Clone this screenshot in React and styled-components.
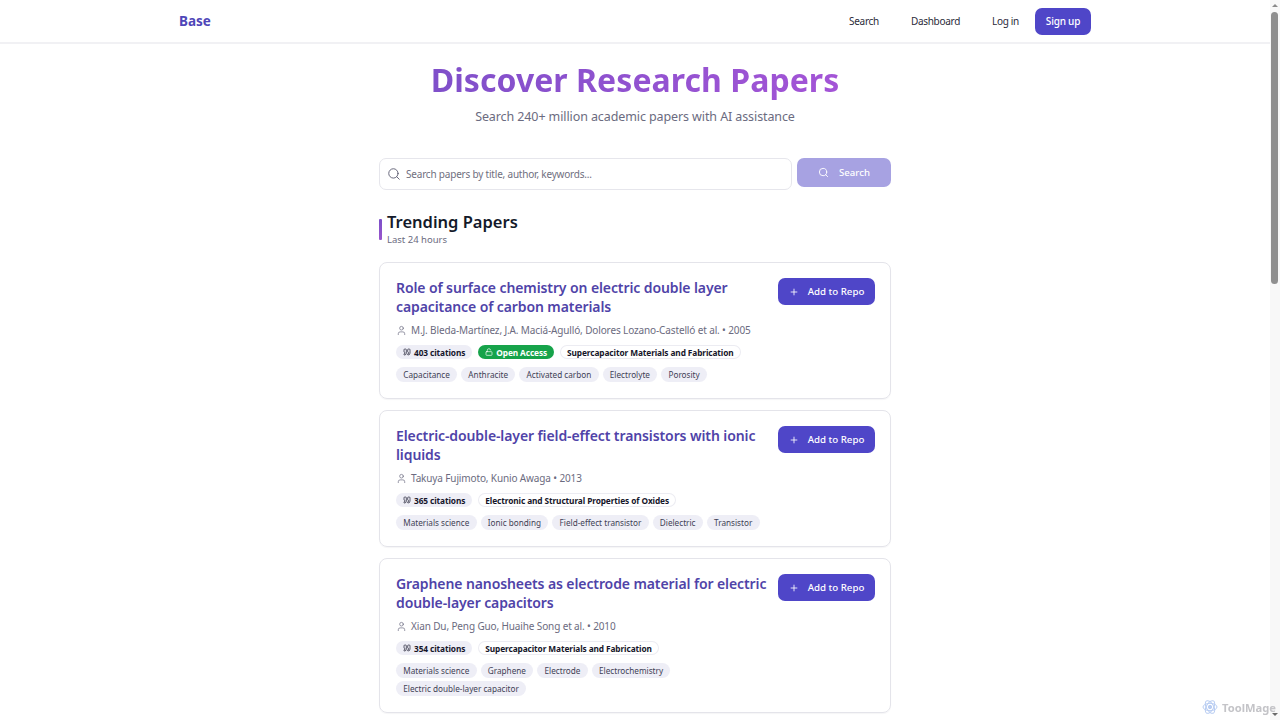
import React from 'react';
import styled, { createGlobalStyle } from 'styled-components';
import { Search, User, Plus, LockOpen, Quote } from 'lucide-react';

const GlobalStyle = createGlobalStyle`
  html, body {
    margin: 0;
    height: 720px;
    overflow: hidden;
    background: #fff;
    font-family: "Noto Sans", "Open Sans", sans-serif;
    color: #111827;
  }
  * { box-sizing: border-box; }
`;

const Shell = styled.div`
  display: flex;
  height: 720px;
  overflow: hidden;
`;

const Page = styled.div`
  flex: 1;
  min-width: 0;
`;

const Header = styled.header`
  height: 44px;
  border-bottom: 2px solid #f1f1f4;
  display: flex;
  justify-content: center;
`;

const HeaderInner = styled.div`
  width: 912px;
  display: flex;
  align-items: center;
  justify-content: space-between;
`;

const Logo = styled.div`
  font-size: 13.5px;
  line-height: 16px;
  font-weight: 700;
  color: #4f46b8;
`;

const Nav = styled.nav`
  display: flex;
  align-items: center;
`;

const NavLink = styled.a`
  font-size: 10px;
  letter-spacing: -0.3px;
  color: #2b2b3a;
  margin-right: ${p => p.$gap}px;
`;

const SignUp = styled.button`
  width: 56px;
  height: 27px;
  border: 0;
  border-radius: 7px;
  background: #4f46c8;
  color: #fff;
  font: 500 10px "Noto Sans", sans-serif;
  letter-spacing: -0.2px;
`;

const Main = styled.main`
  width: 512px;
  margin: 0 auto;
`;

const Hero = styled.div`
  text-align: center;
  padding-top: 14px;
`;

const Title = styled.h1`
  margin: 0;
  font-size: 32px;
  line-height: 44px;
  font-weight: 700;
  letter-spacing: 0.05px;
  white-space: nowrap;
  background: linear-gradient(90deg, #7b4fc8, #a855d8);
  -webkit-background-clip: text;
  background-clip: text;
  color: transparent;
`;

const Subtitle = styled.p`
  margin: 6px 0 0;
  font-size: 12.5px;
  line-height: 18px;
  letter-spacing: -0.1px;
  color: #6b6b80;
`;

const SearchRow = styled.div`
  display: flex;
  gap: 5px;
  margin-top: 32px;
`;

const SearchField = styled.div`
  flex: 1;
  height: 32px;
  border: 1px solid #e6e6ec;
  border-radius: 7px;
  display: flex;
  align-items: center;
  gap: 5px;
  padding-left: 7px;
  font-size: 10px;
  letter-spacing: -0.2px;
  color: #6f6f80;
`;

const SearchButton = styled.button`
  width: 94px;
  height: 29px;
  border: 0;
  border-radius: 7px;
  background: #a7a2e2;
  color: #fff;
  display: flex;
  align-items: center;
  justify-content: center;
  gap: 10px;
  font: 500 9.6px "Noto Sans", sans-serif;
`;

const SectionHead = styled.div`
  display: flex;
  align-items: center;
  gap: 5px;
  margin-top: 20px;
`;

const Accent = styled.div`
  width: 3px;
  height: 21px;
  margin-top: 2px;
  border-radius: 1px;
  background: linear-gradient(180deg, #7b4fc8, #9a55cc);
`;

const SectionTitle = styled.h2`
  margin: 0;
  font-size: 16.5px;
  line-height: 23px;
  font-weight: 600;
  color: #141a2a;
`;

const SectionSub = styled.div`
  margin-top: 1px;
  font-size: 9.5px;
  line-height: 12px;
  color: #6b6b80;
`;

const Cards = styled.div`
  display: flex;
  flex-direction: column;
  gap: 11px;
  margin-top: 16px;
`;

const Card = styled.article`
  border: 1px solid #e4e4ea;
  border-radius: 8px;
  padding: 15px 15px 16px 16px;
  display: flex;
  align-items: flex-start;
  justify-content: space-between;
  box-shadow: 0 1px 1px rgba(20, 20, 40, 0.04);
`;

const CardBody = styled.div`
  width: 371px;
`;

const PaperTitle = styled.h3`
  margin: 0;
  font-size: 14px;
  line-height: 19px;
  letter-spacing: -0.1px;
  font-weight: 600;
  color: #4f43a8;
`;

const Authors = styled.div`
  display: flex;
  align-items: center;
  gap: 4px;
  margin-top: 7px;
  font-size: 10px;
  letter-spacing: -0.13px;
  line-height: 14px;
  color: #6b6b80;
  white-space: nowrap;

  svg {
    flex-shrink: 0;
  }
`;

const Badges = styled.div`
  display: flex;
  gap: 6px;
  margin-top: 8px;
`;

const Badge = styled.span`
  display: inline-flex;
  align-items: center;
  gap: 3px;
  height: 14px;
  padding: 0 7px;
  border-radius: 7px;
  font-size: 8.3px;
  letter-spacing: -0.1px;
  font-weight: 700;
  white-space: nowrap;
  color: ${p => (p.$kind === 'open' ? '#fff' : '#15152a')};
  background: ${p => {
    if (p.$kind === 'open') return '#16a34a';
    if (p.$kind === 'topic') return '#fff';
    return '#eeeef6';
  }};
  box-shadow: ${p => (p.$kind === 'topic' ? 'inset 0 0 0 1px #ececf2' : 'none')};
`;

const Tags = styled.div`
  display: flex;
  flex-wrap: wrap;
  gap: 3px 4px;
  margin-top: 8px;
`;

const Tag = styled.span`
  height: 15px;
  line-height: 15px;
  padding: 0 7.25px;
  border-radius: 8px;
  background: #eeeef6;
  font-size: 8.2px;
  color: #3f3f55;
  white-space: nowrap;
`;

const AddButton = styled.button`
  width: 97px;
  height: 27px;
  border: 0;
  border-radius: 7px;
  background: #4f46c8;
  color: #fff;
  display: flex;
  align-items: center;
  justify-content: center;
  gap: 9px;
  font: 500 9.7px "Noto Sans", sans-serif;
`;

const Scrollbar = styled.aside`
  width: 10px;
  background: #f8f8f8;
  position: relative;
  flex-shrink: 0;
`;

const ScrollThumb = styled.div`
  position: absolute;
  top: 12px;
  left: 1px;
  width: 7px;
  height: 272px;
  border-radius: 4px;
  background: #8f8f8f;
`;

const ScrollArrow = styled.div`
  position: absolute;
  left: 2px;
  width: 0;
  height: 0;
  border-left: 3px solid transparent;
  border-right: 3px solid transparent;
  ${p => (p.$up ? 'top: 4px; border-bottom: 3px solid #8a8a8a;' : 'bottom: 4px; border-top: 3px solid #6a6a6a;')}
`;

const Watermark = styled.div`
  position: fixed;
  right: 4px;
  bottom: 5px;
  display: flex;
  align-items: center;
  gap: 4px;
  font-size: 11.2px;
  font-weight: 700;
  color: #c4c4c8;
`;

const papers = [
  {
    title: 'Role of surface chemistry on electric double layer capacitance of carbon materials',
    authors: 'M.J. Bleda-Martínez, J.A. Maciá-Agulló, Dolores Lozano-Castelló et al. • 2005',
    citations: 403,
    open: true,
    topic: 'Supercapacitor Materials and Fabrication',
    tags: ['Capacitance', 'Anthracite', 'Activated carbon', 'Electrolyte', 'Porosity'],
  },
  {
    title: 'Electric-double-layer field-effect transistors with ionic liquids',
    authors: 'Takuya Fujimoto, Kunio Awaga • 2013',
    citations: 365,
    topic: 'Electronic and Structural Properties of Oxides',
    tags: ['Materials science', 'Ionic bonding', 'Field-effect transistor', 'Dielectric', 'Transistor'],
  },
  {
    title: 'Graphene nanosheets as electrode material for electric double-layer capacitors',
    authors: 'Xian Du, Peng Guo, Huaihe Song et al. • 2010',
    citations: 354,
    topic: 'Supercapacitor Materials and Fabrication',
    tags: ['Materials science', 'Graphene', 'Electrode', 'Electrochemistry', 'Electric double-layer capacitor'],
  },
];

const WatermarkIcon = () => (
  <svg width="16" height="16" viewBox="0 0 24 24" fill="none" stroke="#b9cdf2" strokeWidth="1.5">
    <ellipse cx="12" cy="12" rx="10.500" ry="5.500" />
    <ellipse cx="12" cy="12" rx="10.500" ry="5.500" transform="rotate(60 12 12)" />
    <ellipse cx="12" cy="12" rx="10.500" ry="5.500" transform="rotate(120 12 12)" />
    <circle cx="12" cy="12" r="2.500" fill="#b9cdf2" />
  </svg>
);

const PaperCard = ({ paper }) => (
  <Card>
    <CardBody>
      <PaperTitle>{paper.title}</PaperTitle>
      <Authors>
        <User size={11} strokeWidth={1.5} />
        {paper.authors}
      </Authors>
      <Badges>
        <Badge>
          <Quote size={8} />
          {paper.citations} citations
        </Badge>
        {paper.open && (
          <Badge $kind="open">
            <LockOpen size={8} />
            Open Access
          </Badge>
        )}
        <Badge $kind="topic">{paper.topic}</Badge>
      </Badges>
      <Tags>
        {paper.tags.map(tag => (
          <Tag key={tag}>{tag}</Tag>
        ))}
      </Tags>
    </CardBody>
    <AddButton>
      <Plus size={10} />
      Add to Repo
    </AddButton>
  </Card>
);

export default function App() {
  return (
    <Shell>
      <GlobalStyle />
      <Page>
        <Header>
          <HeaderInner>
            <Logo>Base</Logo>
            <Nav>
              <NavLink $gap={32}>Search</NavLink>
              <NavLink $gap={32}>Dashboard</NavLink>
              <NavLink $gap={16}>Log in</NavLink>
              <SignUp>Sign up</SignUp>
            </Nav>
          </HeaderInner>
        </Header>
        <Main>
          <Hero>
            <Title>Discover Research Papers</Title>
            <Subtitle>Search 240+ million academic papers with AI assistance</Subtitle>
          </Hero>
          <SearchRow>
            <SearchField>
              <Search size={14} strokeWidth={1.5} color="#55556a" />
              Search papers by title, author, keywords...
            </SearchField>
            <SearchButton>
              <Search size={11} />
              Search
            </SearchButton>
          </SearchRow>
          <SectionHead>
            <Accent />
            <div>
              <SectionTitle>Trending Papers</SectionTitle>
              <SectionSub>Last 24 hours</SectionSub>
            </div>
          </SectionHead>
          <Cards>
            {papers.map(paper => (
              <PaperCard key={paper.title} paper={paper} />
            ))}
          </Cards>
        </Main>
      </Page>
      <Scrollbar>
        <ScrollArrow $up />
        <ScrollThumb />
        <ScrollArrow />
      </Scrollbar>
      <Watermark>
        <WatermarkIcon />
        ToolMage
      </Watermark>
    </Shell>
  );
}
